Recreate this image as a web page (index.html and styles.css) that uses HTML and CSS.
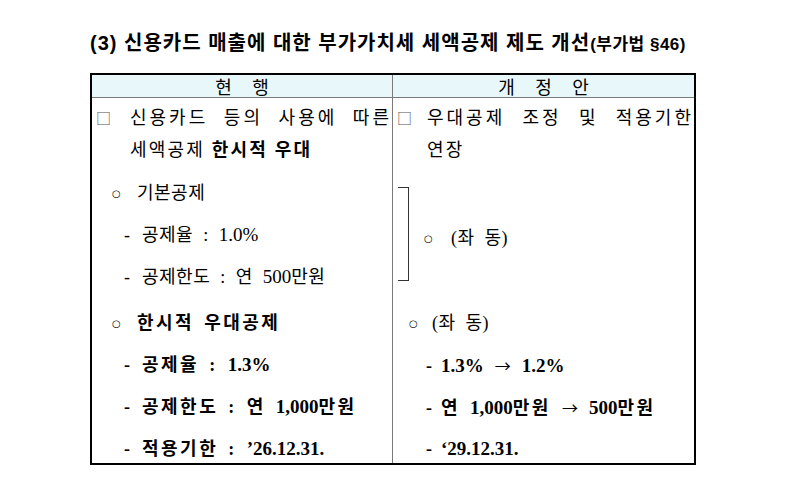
FILE: index.html
```html
<!DOCTYPE html>
<html lang="ko">
<head>
<meta charset="utf-8">
<link rel="stylesheet" href="styles.css">
</head>
<body>
<div class="page">
  <h1 class="title">(3) 신용카드 매출에 대한 부가가치세 세액공제 제도 개선<small>(부가법 §46)</small></h1>
  <div class="compare">
    <div class="head head-left">현 행</div>
    <div class="head head-right">개 정 안</div>

    <div class="cell cell-left">
      <p class="para">
        <span class="line justify"><span class="box box-l">□</span>신용카드 등의 사용에 따른</span>
        <span class="line indent-l">세액공제 <b>한시적 우대</b></span>
      </p>
      <ul class="group g1">
        <li class="item lv1"><span class="circ">○</span>기본공제</li>
        <li class="item lv2"><span class="dash">-</span>공제율 : <span class="num">1.0%</span></li>
        <li class="item lv2"><span class="dash">-</span>공제한도 : 연 <span class="num">500</span>만원</li>
      </ul>
      <ul class="group g2 strong">
        <li class="item lv1"><span class="circ">○</span>한시적 우대공제</li>
        <li class="item lv2"><span class="dash">-</span>공제율 : <span class="num">1.3%</span></li>
        <li class="item lv2"><span class="dash">-</span>공제한도 : 연 <span class="num">1,000</span>만원</li>
        <li class="item lv2"><span class="dash">-</span>적용기한 : <span class="num">’26.12.31.</span></li>
      </ul>
    </div>

    <div class="cell cell-right">
      <p class="para">
        <span class="line justify"><span class="box box-r">□</span>우대공제 조정 및 적용기한</span>
        <span class="line indent-r">연장</span>
      </p>
      <div class="bracket-row">
        <span class="bracket"></span>
        <span class="same"><span class="circ">○</span>(좌 동)</span>
      </div>
      <ul class="group g2r">
        <li class="item rv1"><span class="circ c2">○</span>(좌 동)</li>
        <li class="item rv2 strong"><span class="dash d2">-</span><span class="num">1.3%</span> <span class="arrow">→</span> <span class="num">1.2%</span></li>
        <li class="item rv2 strong"><span class="dash d2">-</span>연 <span class="num">1,000</span>만원 <span class="arrow">→</span> <span class="num">500</span>만원</li>
        <li class="item rv2 strong"><span class="dash d2">-</span><span class="num">‘29.12.31.</span></li>
      </ul>
    </div>
  </div>
</div>
</body>
</html>
```

FILE: styles.css
```css
html, body {
  margin: 0;
  padding: 0;
  background: #fff;
}

body {
  width: 812px;
  height: 486px;
  overflow: hidden;
  color: #000;
  font-family: "Liberation Serif", "Noto Sans CJK KR", serif;
}

.page {
  padding: 30px 0 0 90px;
}

.title {
  margin: 0;
  height: 26px;
  font: 700 20px/26px "Liberation Sans", "Noto Sans CJK KR", sans-serif;
  letter-spacing: 1px;
  white-space: nowrap;
}

.title small {
  font-size: 17px;
  letter-spacing: 0.5px;
}

.compare {
  margin-top: 17px;
  width: 602px;
  border: 2px solid #000;
  display: grid;
  grid-template-columns: 301px 301px;
}

.head {
  height: 22px;
  line-height: 26px;
  background: #e8f8fa;
  border-bottom: 1px solid #7a7a7a;
  text-align: center;
  font-size: 18px;
  word-spacing: 16px;
}

.head-left,
.cell-left {
  border-right: 1px solid #7a7a7a;
}

.cell {
  height: 365px;
  font-size: 18px;
}

.para {
  margin: 0;
  padding-top: 4px;
  letter-spacing: 2.2px;
}

.line {
  display: block;
  height: 32px;
  line-height: 32px;
  white-space: nowrap;
}

.justify {
  text-align: justify;
  text-align-last: justify;
  white-space: normal;
  overflow: hidden;
  letter-spacing: 3px;
}

.cell-left .justify {
  padding: 0 0 0 4px;
}

.cell-right .justify {
  padding: 0 0 0 4px;
}

.indent-l {
  padding-left: 38px;
}

.indent-r {
  padding-left: 34px;
}

.box {
  display: inline-block;
  font-family: "Noto Sans CJK KR", sans-serif;
  font-size: 15px;
  color: #555;
  letter-spacing: 0;
}

.box-l {
  width: 34px;
}

.box-r {
  width: 30px;
}

.group {
  list-style: none;
  margin: 0;
  padding: 0;
  display: flex;
  flex-direction: column;
  gap: 14px;
  letter-spacing: 0.5px;
  word-spacing: 5px;
}

.g1 {
  margin-top: 13px;
}

.g2 {
  margin-top: 18px;
}

.g2r {
  margin-top: 28px;
}

.strong {
  font-weight: 700;
  letter-spacing: 2.5px;
  word-spacing: 3px;
}

.num {
  font-size: 19px;
  letter-spacing: 0;
}

.item {
  height: 28px;
  line-height: 28px;
  white-space: nowrap;
}

.lv1 {
  padding-left: 20px;
}

.lv2 {
  padding-left: 32px;
}

.rv1 {
  padding-left: 16px;
}

.rv2 {
  padding-left: 33px;
}

.circ {
  display: inline-block;
  width: 25px;
  font-family: "DejaVu Sans", sans-serif;
  font-size: 10px;
  font-weight: 400;
  vertical-align: 2px;
  line-height: 10px;
  letter-spacing: 0;
}

.c2 {
  width: 23px;
}

.dash {
  display: inline-block;
  width: 18px;
  letter-spacing: 0;
}

.d2 {
  width: 15px;
}

.arrow {
  font-family: "Noto Sans CJK KR", sans-serif;
  font-weight: 400;
  font-size: 16px;
  letter-spacing: 0;
  margin: 0 1px;
}

.bracket-row {
  margin-top: 20px;
  height: 95px;
  display: flex;
  align-items: center;
  padding-left: 5px;
  letter-spacing: 0.5px;
  word-spacing: 5px;
}

.bracket {
  width: 11px;
  height: 94px;
  border: 1px solid #333;
  border-left: 0;
  box-sizing: border-box;
  margin-right: 15px;
}

.same {
  display: inline-block;
  padding-top: 5px;
  font-size: 18px;
}

.same .circ {
  width: 27px;
}
```
